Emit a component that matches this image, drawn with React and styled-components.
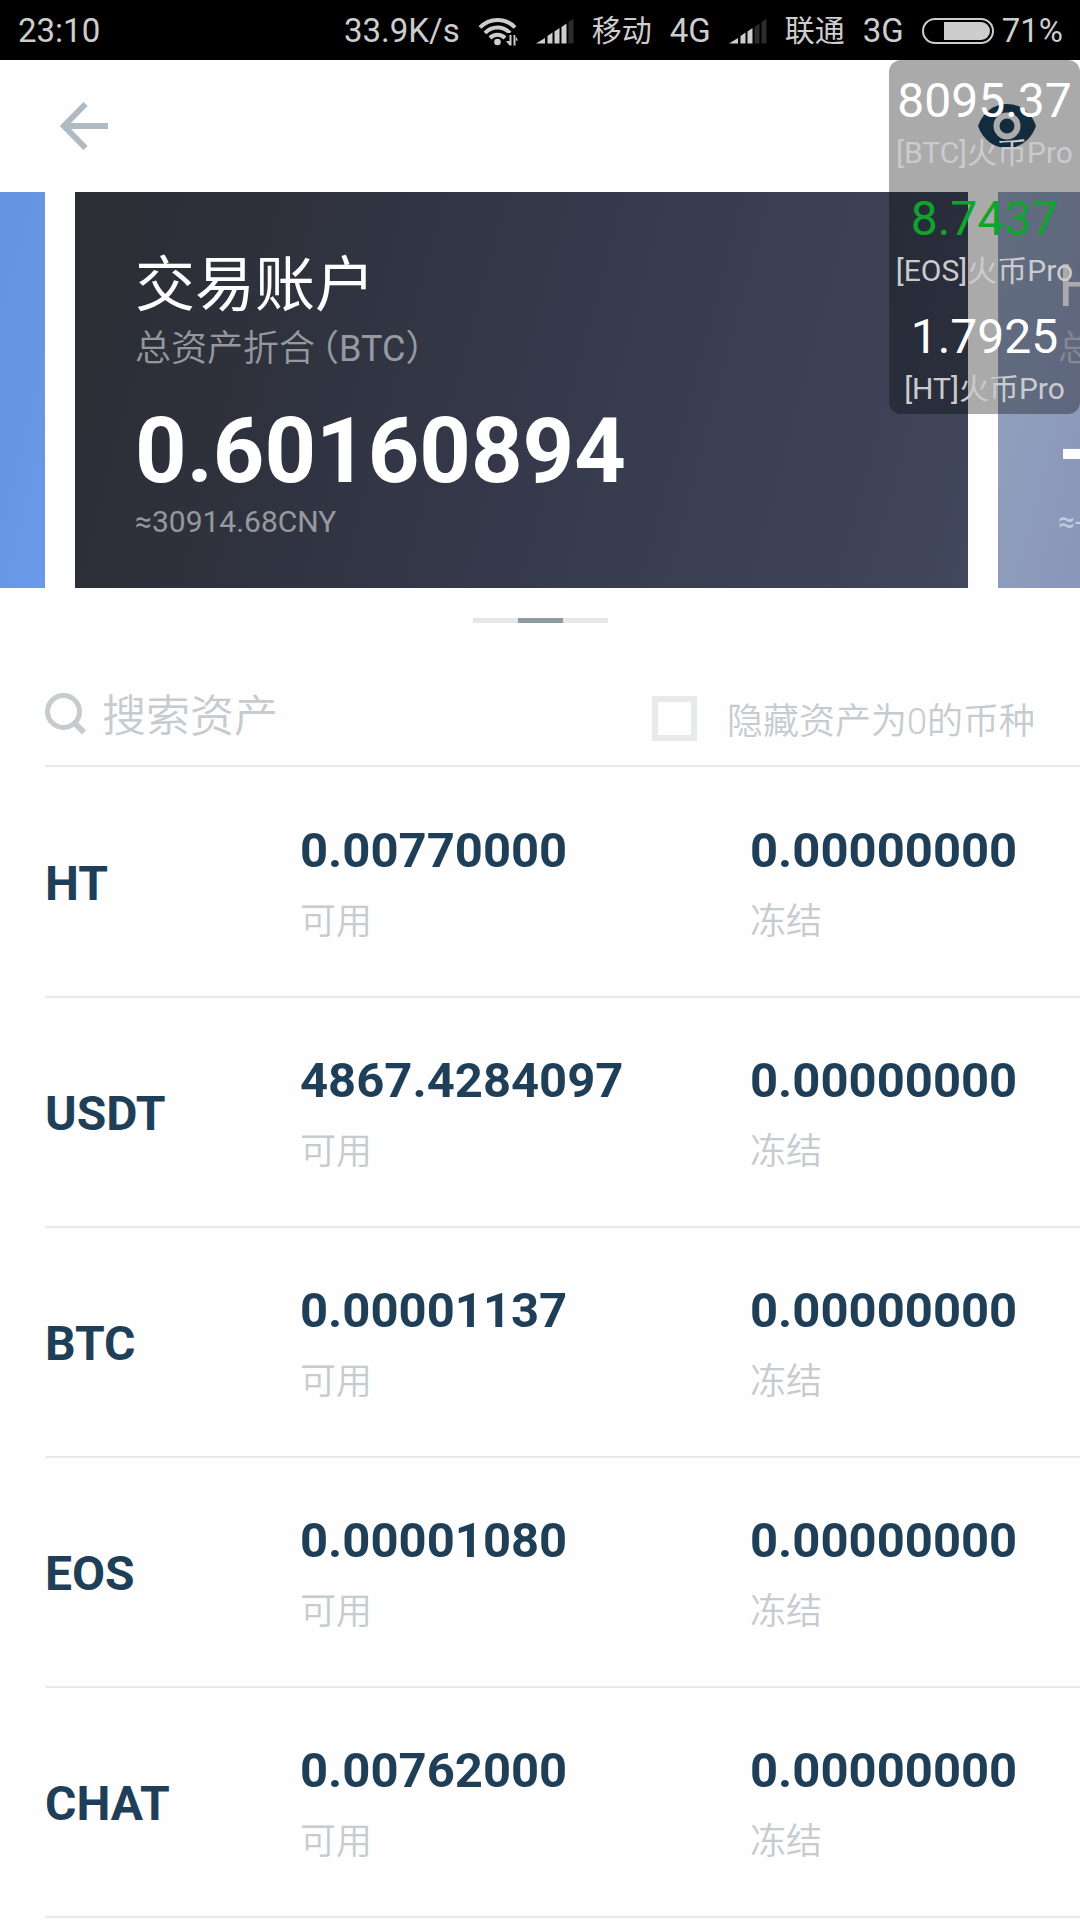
import React, { useState } from "react";
import styled, { createGlobalStyle } from "styled-components";

const assets = [
  { coin: "HT", available: "0.00770000", frozen: "0.00000000" },
  { coin: "USDT", available: "4867.4284097", frozen: "0.00000000" },
  { coin: "BTC", available: "0.00001137", frozen: "0.00000000" },
  { coin: "EOS", available: "0.00001080", frozen: "0.00000000" },
  { coin: "CHAT", available: "0.00762000", frozen: "0.00000000" },
];

const tickers = [
  { price: "8095.37", name: "[BTC]火币Pro" },
  { price: "8.7437", name: "[EOS]火币Pro", up: true },
  { price: "1.7925", name: "[HT]火币Pro" },
];

const Signal = ({ bars }) => (
  <svg width="38" height="26" viewBox="0 0 38 26">
    <path d="M0 25.5 L9 20 V25.5 Z" fill="#cdcdcd" />
    {[
      [11.5, 18],
      [18.5, 13.5],
      [25.5, 9],
      [32.5, 4],
    ].map(([x, y], i) => (
      <path
        key={x}
        d={`M${x} ${y} L${x + 5} ${y - 3.5} V25.5 H${x} Z`}
        fill={i + 2 <= bars ? "#cdcdcd" : "#2c2c2c"}
      />
    ))}
  </svg>
);

const Wifi = () => (
  <svg width="40" height="30" viewBox="0 0 40 30">
    <g fill="none" stroke="#cdcdcd" strokeWidth="4">
      <path d="M2 11.5 A24 24 0 0 1 37 11.5" />
      <path d="M7 17 A17 17 0 0 1 32 17" />
      <path d="M12 22 A10.5 10.5 0 0 1 27 22" />
    </g>
    <circle cx="19.5" cy="26" r="3.3" fill="#cdcdcd" />
    <path d="M28 17 H40 V30 H28 Z" fill="#000" />
    <path
      d="M31.5 19 V29.5 H33.5 V19 Z M31.5 29.5 L28 25 H31.5 Z M35.5 19 V29.5 H37.5 V19 Z M37 19 L40 24.5 H37 Z"
      fill="#cdcdcd"
    />
  </svg>
);

const Battery = () => (
  <svg width="72" height="26" viewBox="0 0 72 26">
    <rect
      x="1"
      y="1"
      width="70"
      height="24"
      rx="12"
      fill="none"
      stroke="#cdcdcd"
      strokeWidth="2"
    />
    <path d="M22 4 H59 A9 9 0 0 1 59 22 H22 Z" fill="#cdcdcd" />
  </svg>
);

const App = () => {
  const [hideEmpty, setHideEmpty] = useState(false);
  const [query, setQuery] = useState("");

  const rows = assets.filter(
    (a) =>
      a.coin.toLowerCase().includes(query.toLowerCase()) &&
      !(hideEmpty && Number(a.available) === 0)
  );

  return (
    <Page>
      <GlobalStyle />
      <StatusBar>
        <span>23:10</span>
        <StatusGroup>
          <span>33.9K/s</span>
          <Wifi />
          <Signal bars={4} />
          <Carrier>移动</Carrier>
          <span>4G</span>
          <Signal bars={3} />
          <Carrier>联通</Carrier>
          <span>3G</span>
          <BatteryGroup>
            <Battery />
            <span>71%</span>
          </BatteryGroup>
        </StatusGroup>
      </StatusBar>

      <AppBar>
        <IconButton aria-label="返回">
          <svg width="48" height="50" viewBox="0 0 48 50">
            <path
              d="M25.5 3 L4 25 L25.5 47 M4 25 H48"
              fill="none"
              stroke="#b0bac2"
              strokeWidth="6"
            />
          </svg>
        </IconButton>
        <IconButton aria-label="显示资产">
          <svg width="58" height="44" viewBox="0 0 58 44">
            <path
              d="M0 22 C5 8 16 0 29 0 C42 0 53 8 58 22 C53 36 42 44 29 44 C16 44 5 36 0 22 Z"
              fill="#1b405c"
            />
            <circle
              cx="29"
              cy="22"
              r="10.5"
              fill="none"
              stroke="#fff"
              strokeWidth="6"
            />
          </svg>
        </IconButton>
      </AppBar>

      <Carousel>
        <PreviousCard />
        <CurrentCard>
          <CardTitle>交易账户</CardTitle>
          <CardCaption>
            总资产折合<CardUnit>（BTC）</CardUnit>
          </CardCaption>
          <CardTotal>0.60160894</CardTotal>
          <CardFiat>≈30914.68CNY</CardFiat>
        </CurrentCard>
        <NextCard>
          <CardTitle>HADAX账户</CardTitle>
          <CardCaption>
            总资产折合<CardUnit>（BTC）</CardUnit>
          </CardCaption>
          <CardTotal>--</CardTotal>
          <CardFiat>≈--CNY</CardFiat>
        </NextCard>
      </Carousel>
      <Pager>
        <PagerMark />
        <PagerMark $active />
        <PagerMark />
      </Pager>

      <Content>
        <Toolbar>
          <SearchLabel>
            <svg width="42" height="48" viewBox="0 0 42 48">
              <g fill="none" stroke="#c6cbce">
                <circle cx="18.5" cy="18.5" r="16" strokeWidth="5" />
                <path d="M30.5 31 L39 39.5" strokeWidth="6" />
              </g>
            </svg>
            <SearchInput
              aria-label="搜索资产"
              placeholder="搜索资产"
              value={query}
              onChange={(e) => setQuery(e.target.value)}
            />
          </SearchLabel>
          <HideLabel>
            <Checkbox
              type="checkbox"
              checked={hideEmpty}
              onChange={(e) => setHideEmpty(e.target.checked)}
            />
            隐藏资产为0的币种
          </HideLabel>
        </Toolbar>

        <Table>
          <colgroup>
            <CoinCol />
            <AvailableCol />
            <col />
          </colgroup>
          <tbody>
            {rows.map((a) => (
              <tr key={a.coin}>
                <Coin scope="row">{a.coin}</Coin>
                <Cell>
                  <Amount>{a.available}</Amount>
                  <Note>可用</Note>
                </Cell>
                <Cell>
                  <Amount>{a.frozen}</Amount>
                  <Note>冻结</Note>
                </Cell>
              </tr>
            ))}
          </tbody>
        </Table>
      </Content>

      <TickerPanel>
        {tickers.map((t) => (
          <Ticker key={t.name}>
            <TickerPrice $up={t.up}>{t.price}</TickerPrice>
            <TickerName>{t.name}</TickerName>
          </Ticker>
        ))}
      </TickerPanel>
    </Page>
  );
};

const GlobalStyle = createGlobalStyle`
  body {
    margin: 0;
    background: #fefefe;
    font-family: Roboto, "Noto Sans CJK SC", sans-serif;
  }

  svg {
    display: block;
    flex: none;
  }
`;

const Page = styled.div`
  position: relative;
  overflow: hidden;
`;

const StatusBar = styled.header`
  box-sizing: border-box;
  display: flex;
  justify-content: space-between;
  align-items: center;
  height: 60px;
  padding: 2px 17px 0 18px;
  background: #000;
  color: #cdcdcd;
  font-size: 33px;
  line-height: 40px;
`;

const StatusGroup = styled.div`
  display: flex;
  align-items: center;
  gap: 18px;
`;

const BatteryGroup = styled.div`
  display: flex;
  align-items: center;
  gap: 8px;
`;

const Carrier = styled.span`
  font-size: 30px;
`;

const AppBar = styled.nav`
  display: flex;
  justify-content: space-between;
  align-items: center;
  height: 132px;
  padding: 0 44px 0 60px;
`;

const IconButton = styled.button`
  padding: 0;
  border: 0;
  background: none;
  cursor: pointer;
`;

const Carousel = styled.section`
  display: flex;
  gap: 30px;
  height: 396px;
`;

const Card = styled.article`
  box-sizing: border-box;
  padding: 56px 0 0 60px;
  overflow: hidden;
  white-space: nowrap;
  color: #fff;
`;

const PreviousCard = styled(Card)`
  flex: 0 0 45px;
  padding: 0;
  background: linear-gradient(105deg, #6593e1, #6a99e9);
`;

const CurrentCard = styled(Card)`
  flex: 1;
  background: linear-gradient(105deg, #2a2d32, #333748 45%, #41475c);
`;

const NextCard = styled(Card)`
  flex: 0 0 82px;
  background: linear-gradient(105deg, #93a3bf, #8a96ba);
`;

const CardTitle = styled.h2`
  margin: 0;
  font-size: 60px;
  font-weight: 400;
  line-height: 76px;
`;

const CardCaption = styled.p`
  margin: 0;
  color: rgba(255, 255, 255, 0.5);
  font-size: 36px;
  font-weight: 350;
  line-height: 50px;
  font-feature-settings: "halt";
`;

const CardUnit = styled.span`
  margin-left: 6px;
  font-weight: 400;
`;

const CardTotal = styled.p`
  margin: 25px 0 0;
  font-size: 90px;
  font-weight: 700;
  line-height: 106px;
`;

const CardFiat = styled.p`
  margin: 0;
  color: rgba(255, 255, 255, 0.5);
  font-size: 30px;
  line-height: 34px;
`;

const Pager = styled.div`
  display: flex;
  justify-content: center;
  margin-top: 30px;
`;

const PagerMark = styled.span`
  width: 45px;
  height: 5px;
  background: ${({ $active }) => ($active ? "#8d9ca3" : "#e5e7e8")};
`;

const Content = styled.main`
  margin-left: 45px;
`;

const Toolbar = styled.div`
  display: flex;
  justify-content: space-between;
  align-items: center;
  height: 96px;
  padding: 46px 45px 0 0;
  border-bottom: 2px solid #e7e9ea;
`;

const SearchLabel = styled.label`
  display: flex;
  align-items: center;
  flex: 1;
  gap: 15px;
`;

const SearchInput = styled.input`
  width: 100%;
  min-width: 0;
  padding: 0;
  border: 0;
  outline: 0;
  background: none;
  color: #1f3f59;
  font-family: inherit;
  font-size: 44px;
  font-weight: 350;
  line-height: 60px;

  &::placeholder {
    color: #c6cbd0;
    opacity: 1;
  }
`;

const HideLabel = styled.label`
  display: flex;
  align-items: center;
  gap: 30px;
  padding-top: 2px;
  color: #c6cbd0;
  font-size: 36px;
  font-weight: 350;
  white-space: nowrap;
`;

const Checkbox = styled.input`
  appearance: none;
  box-sizing: border-box;
  width: 45px;
  height: 45px;
  margin: 0;
  border: 6px solid #e8e9ea;

  &:checked {
    background: #8d9ca3;
  }
`;

const Table = styled.table`
  width: 100%;
  margin-top: 1px;
  table-layout: fixed;
  border-spacing: 0;
`;

const CoinCol = styled.col`
  width: 255px;
`;

const AvailableCol = styled.col`
  width: 450px;
`;

const Cell = styled.td`
  padding: 55px 0 47px;
  border-bottom: 2px solid #e7e9ea;
  vertical-align: top;
`;

const Coin = styled.th`
  padding: 4px 0 0;
  border-bottom: 2px solid #e7e9ea;
  color: #1f3f59;
  font-size: 48px;
  font-weight: 700;
  line-height: 56px;
  text-align: left;
`;

const Amount = styled.div`
  color: #1f3f59;
  font-size: 49px;
  font-weight: 700;
  line-height: 56px;
`;

const Note = styled.div`
  margin-top: 17px;
  padding-bottom: 1px;
  color: #c6cbd0;
  font-size: 36px;
  font-weight: 350;
  line-height: 52px;
`;

/* floating price window of the system overlay */
const TickerPanel = styled.aside`
  position: absolute;
  top: 60px;
  right: 0;
  width: 191px;
  border-radius: 12px;
  background: rgba(0, 0, 0, 0.33);
  white-space: nowrap;
`;

const Ticker = styled.div`
  display: flex;
  flex-direction: column;
  align-items: center;
  gap: 6px;
  padding: 13px 0 7px;
`;

const TickerPrice = styled.div`
  color: ${({ $up }) => ($up ? "#0ea52c" : "#fff")};
  font-size: 48px;
  line-height: 56px;
`;

const TickerName = styled.div`
  color: #cbcbcf;
  font-size: 30px;
  line-height: 36px;
`;

export default App;
